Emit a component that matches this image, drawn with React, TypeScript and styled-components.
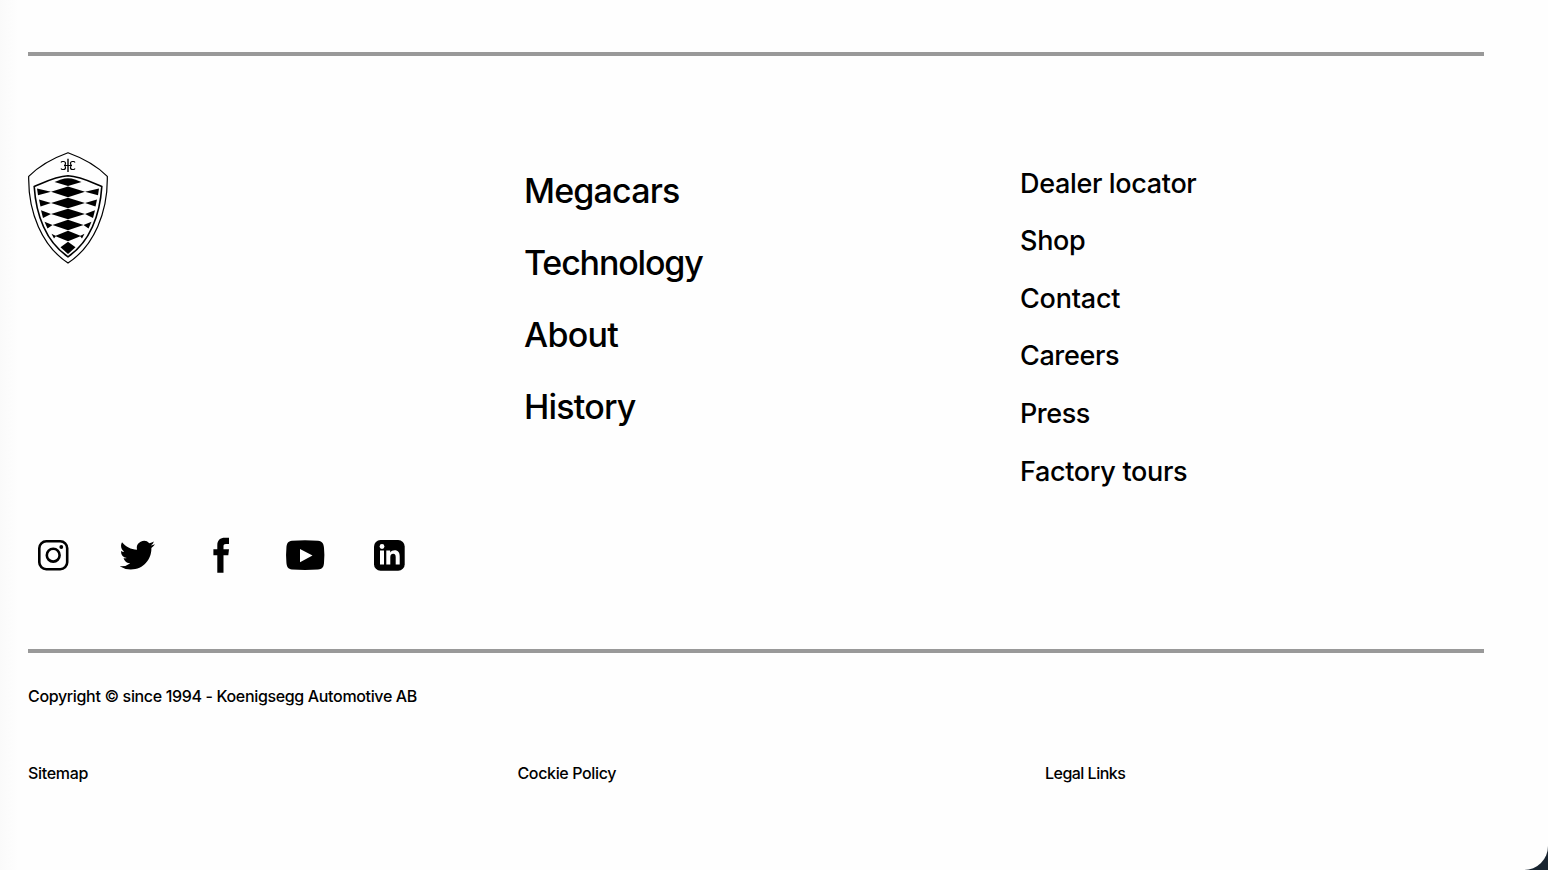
import React from 'react';
import styled, { createGlobalStyle } from 'styled-components';

const GlobalStyle = createGlobalStyle`
  * { box-sizing: border-box; }
  body { margin: 0; background: #182430; font-family: Inter, 'Liberation Sans', sans-serif; color: #000; overflow: hidden; }
`;

const Page = styled.div`
  width: 1548px;
  height: 870px;
  padding: 52px 64px 0 28px;
  background: linear-gradient(90deg, #fafafa 0, #fefefe 18px, #fefefe 100%);
  border-bottom-right-radius: 24px;
`;
const Footer = styled.footer`
  display: flex;
  flex-direction: column;
`;
const Rule = styled.hr`
  width: 100%;
  height: 4px;
  margin: 0;
  border: 0;
  background: #999;
`;
const Columns = styled.div`
  display: grid;
  grid-template-columns: 496px 496px 1fr;
  height: 593px;
`;
const Brand = styled.div`
  display: flex;
  flex-direction: column;
  justify-content: space-between;
  padding: 96px 0 67px;
`;
const Nav = styled.nav<{ $top: number }>`
  display: flex;
  flex-direction: column;
  padding-top: ${p => p.$top}px;
`;
const NavLink = styled.a<{ $size: number; $line: number; $track: number }>`
  font-size: ${p => p.$size}px;
  line-height: ${p => p.$line}px;
  letter-spacing: ${p => p.$track}px;
  font-weight: 500;
  white-space: nowrap;
`;
const Social = styled.div`
  display: flex;
  height: 52px;
`;
const SocialLink = styled.a`
  width: 84px;
  height: 52px;
  svg { display: block; }
`;
const SmallText = styled.span<{ $track: number }>`
  font-size: 16px;
  line-height: 24px;
  letter-spacing: ${p => p.$track}px;
  font-weight: 500;
  white-space: nowrap;
`;
const Copyright = styled.div`
  display: flex;
  padding-top: 31px;
`;
const Legal = styled.div`
  display: grid;
  grid-template-columns: 489.5px 527.5px 1fr;
  padding-top: 53px;
`;

const Shield = () => (
  <svg width="80" height="112" viewBox="0 0 80 112" fill="none" stroke="#000">
    <path d="M40 .7C28 5 13 12 .7 24.3C0 60 14 94 40 111C66 94 80 60 79.3 24.3C67 12 52 5 40 .7Z" strokeWidth="1.2" />
    <path d="M40 23.8C28 24.3 17 30 6.2 34.5C8 63 18 90 40 104.8C62 90 72 63 73.8 34.5C63 30 52 24.3 40 23.8Z" strokeWidth="1.600" />
    <path d="M40 6.800V20" strokeWidth="1.400" />
    <path d="M33 10.500Q33.500 9.500 34.500 9.500H35.500Q37.500 9.500 37.500 11.500Q37.500 13.500 36 13.500H44Q42.500 13.500 42.500 11.500Q42.500 9.500 44.500 9.500H45.500Q46.500 9.500 47 10.500M33 16.500Q33.500 17.500 34.500 17.500H35.500Q37.500 17.500 37.500 15.500Q37.500 13.500 36 13.500M44 13.500Q42.500 13.500 42.500 15.500Q42.500 17.500 44.500 17.500H45.500Q46.500 17.500 47 16.500" strokeWidth="1.200" />
    <g fill="#000" stroke="none">
      <path d="M26.500 30L33 27.500Q40 25 47 27.500L53.500 30L40 34Z" />
      <path d="M40 34.500L57 39.800L40 45.200L23 39.800Z" />
      <path d="M40 45.700L57 51L40 56.300L23 51Z" />
      <path d="M40 56.700L57 62L40 67.300L23 62Z" />
      <path d="M40 67.700L55.500 73L40 78.300L24.500 73Z" />
      <path d="M40 78.700L53 84L40 89.300L27 84Z" />
      <path d="M40 89.700L47.500 95.300L40 102L32.500 95.300Z" />
      <path d="M9 36.500L23 39.800L10 43.200ZM71 36.500L57 39.800L70 43.200Z" />
      <path d="M11 47.500L23 51L12.500 54.500ZM69 47.500L57 51L67.500 54.500Z" />
      <path d="M13 58.300L23 62L15 66ZM67 58.300L57 62L65 66Z" />
      <path d="M16.500 69.700L24.500 73L19.500 76.500ZM63.500 69.700L55.500 73L60.500 76.500Z" />
      <path d="M23.500 81.700L28 84L26 86.500ZM56.500 81.700L52 84L54 86.500Z" />
    </g>
  </svg>
);

const Instagram = () => (
  <svg width="52" height="52" viewBox="0 0 52 52" fill="none" stroke="#000">
    <rect x="11.300" y="11.300" width="27.900" height="27.900" rx="7" strokeWidth="2.600" />
    <circle cx="25.200" cy="25.200" r="6.400" strokeWidth="2.600" />
    <circle cx="33.300" cy="17" r="1.900" fill="#000" stroke="none" />
  </svg>
);
const Twitter = () => (
  <svg width="52" height="52" viewBox="0 0 52 52">
    <path transform="translate(7.600 7.600) scale(1.475 1.465)" d="M23.950 4.570a10 10 0 0 1-2.820.770 4.960 4.960 0 0 0 2.160-2.720c-.950.550-2 .950-3.130 1.180a4.920 4.920 0 0 0-8.380 4.480C7.690 8.090 4.070 6.130 1.640 3.160a4.820 4.820 0 0 0-.670 2.480c0 1.710.870 3.210 2.190 4.100a4.900 4.900 0 0 1-2.230-.620v.060a4.920 4.920 0 0 0 3.950 4.830 5 5 0 0 1-2.210.080 4.940 4.940 0 0 0 4.600 3.420A9.870 9.870 0 0 1 0 19.540a13.990 13.990 0 0 0 7.550 2.210c9.050 0 14-7.500 14-13.990 0-.210 0-.420-.020-.630a9.940 9.940 0 0 0 2.460-2.550z" />
  </svg>
);
const Facebook = () => (
  <svg width="52" height="52" viewBox="0 0 52 52">
    <path d="M21.300 42.800V25.200H17.400V19.200H21.300V15.500C21.300 10.200 24.200 7.800 29 7.800H33V14H30C28.100 14 27.500 14.700 27.500 16.500V19.200H33L32.300 25.200H27.500V42.800Z" />
  </svg>
);
const YouTube = () => (
  <svg width="52" height="52" viewBox="0 0 52 52">
    <path fillRule="evenodd" d="M12 10.700Q25 9.800 38 10.700C42.500 11 43.700 14 44 18Q44.800 25 44 33C43.600 37.500 42 39.300 38 39.500Q25 40.300 12 39.500C8 39.200 6.700 36.500 6.400 32.500Q5.700 25 6.400 18C6.700 13.500 8 11 12 10.700ZM20 19V32.200L32.500 25.500Z" />
  </svg>
);
const LinkedIn = () => (
  <svg width="52" height="52" viewBox="0 0 52 52">
    <rect x="10" y="10" width="30.700" height="30.700" rx="6.500" />
    <g fill="#fefefe">
      <circle cx="18" cy="16.500" r="2.400" />
      <path d="M16 20.500H20V34.500H16ZM22.300 20.500H26.200V22.500C27.200 20.900 28.600 20.200 30.600 20.200C34.300 20.200 35.700 22.600 35.700 26.300V34.500H31.700V27.200C31.700 24.900 31.100 23.700 29.200 23.700C27.200 23.700 26.300 25 26.300 27.200V34.500H22.300Z" />
    </g>
  </svg>
);

const primary: [string, number][] = [['Megacars', -0.83], ['Technology', -1.17], ['About', -0.7], ['History', -0.8]];
const secondary: [string, number][] = [['Dealer locator', -0.34], ['Shop', -0.3], ['Contact', -0.22], ['Careers', -0.38], ['Press', -0.45], ['Factory tours', -0.33]];
const icons = [Instagram, Twitter, Facebook, YouTube, LinkedIn];

export default function App() {
  return (
    <>
      <GlobalStyle />
      <Page>
        <Footer>
          <Rule />
          <Columns>
            <Brand>
              <Shield />
              <Social>
                {icons.map((Icon, i) => <SocialLink key={i}><Icon /></SocialLink>)}
              </Social>
            </Brand>
            <Nav $top={99}>
              {primary.map(([label, track]) => <NavLink key={label} $size={34} $line={72} $track={track}>{label}</NavLink>)}
            </Nav>
            <Nav $top={98.7}>
              {secondary.map(([label, track]) => <NavLink key={label} $size={27} $line={57.6} $track={track}>{label}</NavLink>)}
            </Nav>
          </Columns>
          <Rule />
          <Copyright><SmallText $track={-0.345}>Copyright © since 1994 - Koenigsegg Automotive AB</SmallText></Copyright>
          <Legal>
            <SmallText $track={-0.3}>Sitemap</SmallText>
            <SmallText $track={-0.36}>Cockie Policy</SmallText>
            <SmallText $track={-0.52}>Legal Links</SmallText>
          </Legal>
        </Footer>
      </Page>
    </>
  );
}
